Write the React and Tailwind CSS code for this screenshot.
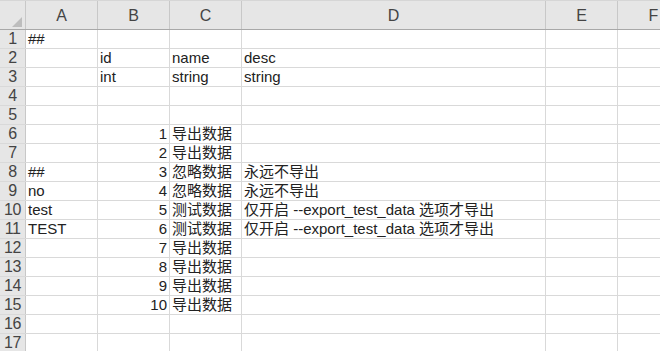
const cols = ['A', 'B', 'C', 'D', 'E', 'F']
const widths = ['w-[26px]', 'w-[72px]', 'w-[72px]', 'w-[72px]', 'w-[304px]', 'w-[72px]', 'w-[72px]']

// [A, B, C, D]
const rows = [
  ['##', '', '', ''],
  ['', 'id', 'name', 'desc'],
  ['', 'int', 'string', 'string'],
  ['', '', '', ''],
  ['', '', '', ''],
  ['', '1', '导出数据', ''],
  ['', '2', '导出数据', ''],
  ['##', '3', '忽略数据', '永远不导出'],
  ['no', '4', '忽略数据', '永远不导出'],
  ['test', '5', '测试数据', '仅开启 --export_test_data 选项才导出'],
  ['TEST', '6', '测试数据', '仅开启 --export_test_data 选项才导出'],
  ['', '7', '导出数据', ''],
  ['', '8', '导出数据', ''],
  ['', '9', '导出数据', ''],
  ['', '10', '导出数据', ''],
  ['', '', '', ''],
  ['', '', '', ''],
]

const font = { fontFamily: '"Liberation Sans", "Noto Sans CJK SC", sans-serif' }

export default function App() {
  return (
    <div className="w-[660px] h-[351px] overflow-hidden bg-white text-[15px] text-[#222] antialiased" style={font}>
      <div className="w-[762px]">
        {/* column header */}
        <div className="flex h-[30px] bg-[#e6e6e6] border-t border-[#d6d6d6] border-b border-b-[#a8a8a8]">
          <div className={`${widths[0]} shrink-0 border-r border-[#c8c8c8] flex items-end justify-end pr-[3px] pb-[2px]`}>
            <div className="w-0 h-0 border-l-[10px] border-l-transparent border-b-[10px] border-b-[#bdbdbd]" />
          </div>
          {cols.map((c, i) => (
            <div
              key={c}
              className={`${widths[i + 1]} shrink-0 border-r border-[#c8c8c8] flex items-end justify-center pb-[1px] text-[16px] text-[#444]`}
            >
              {c}
            </div>
          ))}
        </div>
        {rows.map((r, ri) => (
          <div key={ri} className="flex h-[19px] border-b border-[#d9d9d9]">
            <div className={`${widths[0]} shrink-0 bg-[#e6e6e6] border-r border-[#c8c8c8] flex items-end justify-center text-[16px] leading-[18px] text-[#444] tracking-[-0.5px]`}>
              {ri + 1}
            </div>
            <div className={`${widths[1]} shrink-0 border-r border-[#d9d9d9] flex items-end pl-[2px] leading-[18px] whitespace-nowrap`}>
              {r[0]}
            </div>
            <div className={`${widths[2]} shrink-0 border-r border-[#d9d9d9] flex items-end leading-[18px] whitespace-nowrap ${/^\d+$/.test(r[1]) ? 'justify-end pr-[2px]' : 'pl-[2px]'}`}>
              {r[1]}
            </div>
            <div className={`${widths[3]} shrink-0 border-r border-[#d9d9d9] flex items-end pl-[2px] leading-[18px] whitespace-nowrap`}>
              {r[2]}
            </div>
            <div className={`${widths[4]} shrink-0 border-r border-[#d9d9d9] flex items-end pl-[2px] leading-[18px] whitespace-nowrap`}>
              {r[3]}
            </div>
            <div className={`${widths[5]} shrink-0 border-r border-[#d9d9d9]`} />
            <div className={`${widths[6]} shrink-0 border-r border-[#d9d9d9]`} />
          </div>
        ))}
      </div>
    </div>
  )
}
